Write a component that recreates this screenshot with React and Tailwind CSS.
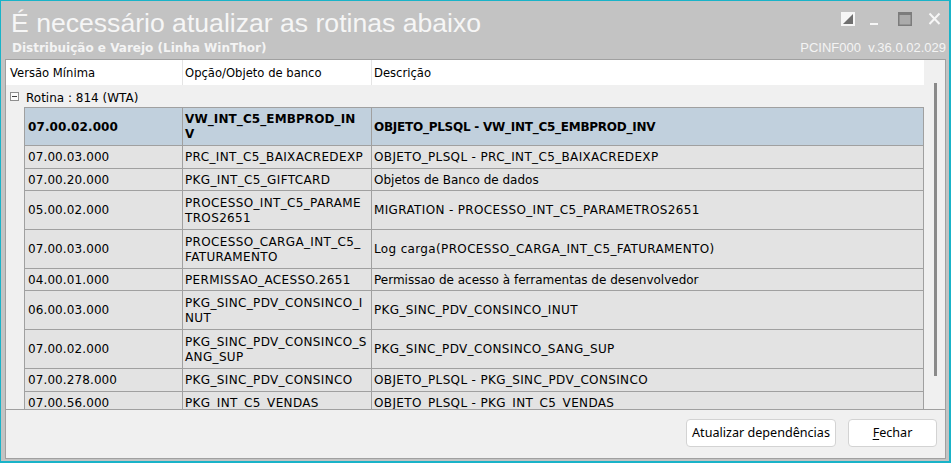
import React from "react";

const rows = [
  { v: "07.00.02.000", o: ["VW_INT_C5_EMBPROD_IN", "V"], d: "OBJETO_PLSQL - VW_INT_C5_EMBPROD_INV", h: "h-[39px]", sel: true },
  { v: "07.00.03.000", o: ["PRC_INT_C5_BAIXACREDEXP"], d: "OBJETO_PLSQL - PRC_INT_C5_BAIXACREDEXP", h: "h-[23px]", caps: true },
  { v: "07.00.20.000", o: ["PKG_INT_C5_GIFTCARD"], d: "Objetos de Banco de dados", h: "h-[22px]" },
  { v: "05.00.02.000", o: ["PROCESSO_INT_C5_PARAME", "TROS2651"], d: "MIGRATION - PROCESSO_INT_C5_PARAMETROS2651", h: "h-[39px]", caps: true },
  { v: "07.00.03.000", o: ["PROCESSO_CARGA_INT_C5_", "FATURAMENTO"], d: "Log carga(PROCESSO_CARGA_INT_C5_FATURAMENTO)", h: "h-[39px]", caps: true },
  { v: "04.00.01.000", o: ["PERMISSAO_ACESSO.2651"], d: "Permissao de acesso à ferramentas de desenvolvedor", h: "h-[22px]" },
  { v: "06.00.03.000", o: ["PKG_SINC_PDV_CONSINCO_I", "NUT"], d: "PKG_SINC_PDV_CONSINCO_INUT", h: "h-[39px]", caps: true },
  { v: "07.00.02.000", o: ["PKG_SINC_PDV_CONSINCO_S", "ANG_SUP"], d: "PKG_SINC_PDV_CONSINCO_SANG_SUP", h: "h-[39px]", caps: true },
  { v: "07.00.278.000", o: ["PKG_SINC_PDV_CONSINCO"], d: "OBJETO_PLSQL - PKG_SINC_PDV_CONSINCO", h: "h-[23px]", caps: true },
  { v: "07.00.56.000", o: ["PKG_INT_C5_VENDAS"], d: "OBJETO_PLSQL - PKG_INT_C5_VENDAS", h: "h-[22px]", caps: true },
];

function Row({ r }) {
  const bg = r.sel ? "bg-[#c1d0dd] font-bold" : "bg-[#e3e3e3]";
  const track3 = r.sel ? "tracking-[-0.25px]" : r.caps ? "tracking-[0.35px]" : "";
  return (
    <div className={`flex shrink-0 ${r.h}`}>
      <div className="w-[18px] shrink-0 bg-[#f0f0f0]" />
      <div className={`flex flex-1 border-b border-[#a0a0a0] ${r.sel ? "border-t" : ""} ${bg}`}>
        <div className="flex w-[158px] shrink-0 items-center border-l border-[#a0a0a0] pl-[3px] pt-[1px] leading-[15px] tracking-[0.1px] whitespace-nowrap">
          {r.v}
        </div>
        <div
          className={`flex w-[189px] shrink-0 flex-col justify-center border-l border-[#a0a0a0] pl-[2px] pt-[1px] leading-[15px] whitespace-nowrap ${
            r.sel ? "tracking-[0.1px]" : "tracking-[0.35px]"
          }`}
        >
          {r.o.map((t, i) => (
            <span key={i}>{t}</span>
          ))}
        </div>
        <div className={`flex flex-1 items-center border-l border-r border-[#a0a0a0] pl-[2px] pt-[1px] leading-[15px] whitespace-nowrap ${track3}`}>
          {r.d}
        </div>
      </div>
    </div>
  );
}

export default function App() {
  return (
    <div className="flex h-[463px] w-[951px] flex-col overflow-hidden border-t border-l border-r-2 border-b-2 border-[#19b3c8] bg-[#c3c3c3]">
      {/* Title block */}
      <div className="flex h-[58px] shrink-0 flex-col">
        <div className="flex items-start pt-[7px]">
          <div className="pl-[10px] font-['Liberation_Sans',Arial,sans-serif] text-[26.6px] leading-[30px] text-[#f6f6f6] whitespace-nowrap">
            É necessário atualizar as rotinas abaixo
          </div>
          <div className="ml-auto mt-[4px] flex items-start pr-[8px]">
            <svg width="14" height="14" viewBox="0 0 14 14">
              <rect x="0.75" y="0.75" width="12.5" height="12.5" fill="#f6f6f6" stroke="#f6f6f6" strokeWidth="1.5" />
              <polygon points="2,12 12,2 12,12" fill="#6f6f6f" />
            </svg>
            <svg width="8" height="14" viewBox="0 0 8 14" className="ml-[15px]">
              <rect x="0" y="11" width="8" height="2" fill="#f6f6f6" />
            </svg>
            <svg width="14" height="14" viewBox="0 0 14 14" className="ml-[20px]">
              <rect x="0.75" y="0.75" width="12.5" height="12.5" fill="#ababab" stroke="#7c7c7c" strokeWidth="1.5" />
              <rect x="0" y="0" width="14" height="3" fill="#7c7c7c" />
            </svg>
            <svg width="13" height="14" viewBox="0 0 13 14" className="ml-[16px]">
              <path d="M1.5 1.5 L11.5 12 M11.5 1.5 L1.5 12" stroke="#f6f6f6" strokeWidth="2" />
            </svg>
          </div>
        </div>
        <div className="mt-[3px] flex items-baseline pl-[11px] pr-[3px]">
          <span className="font-['DejaVu_Sans',sans-serif] text-[12px] font-bold leading-[14px] text-[#f4f4f4] whitespace-nowrap">
            Distribuição e Varejo (Linha WinThor)
          </span>
          <span className="ml-auto font-['Liberation_Sans',Arial,sans-serif] text-[13px] leading-[14px] text-[#f4f4f4] whitespace-pre">
            PCINF000  v.36.0.02.029
          </span>
        </div>
      </div>

      {/* Panel */}
      <div className="ml-[4px] mr-[3px] flex h-[400px] shrink-0 flex-col border border-[#a0a0a0] bg-[#f0f0f0]">
        <div className="flex h-[350px] shrink-0 border-b border-[#a0a0a0] font-['DejaVu_Sans',sans-serif] text-[12px] text-black">
          <div className="flex w-[918px] shrink-0 flex-col overflow-hidden">
            {/* header */}
            <div className="flex h-[25px] shrink-0 bg-white text-[11.6px]">
              <div className="flex w-[176px] shrink-0 items-center pl-[4px] pt-[3px]">Versão Mínima</div>
              <div className="flex w-[189px] shrink-0 items-center border-l border-[#e4e4e4] pl-[2px] pt-[3px]">
                Opção/Objeto de banco
              </div>
              <div className="flex flex-1 items-center border-l border-[#e4e4e4] pl-[2px] pt-[3px]">Descrição</div>
            </div>
            {/* group row */}
            <div className="flex h-[22px] shrink-0 items-center bg-[#f0f0f0]">
              <div className="ml-[4px] flex h-[9px] w-[9px] items-center justify-center border border-[#8e8e8e] bg-[#fafafa]">
                <div className="h-px w-[5px] bg-[#404040]" />
              </div>
              <span className="ml-[7px] pt-[3px] whitespace-nowrap">Rotina : 814 (WTA)</span>
            </div>
            {rows.map((r, i) => (
              <Row key={i} r={r} />
            ))}
          </div>
          {/* scrollbar */}
          <div className="flex flex-1 flex-col bg-[#f0f0f0] pt-[23px] pl-[10px]">
            <div className="h-[293px] w-[3px] bg-[#8a8a8a]" />
          </div>
        </div>
        {/* button bar */}
        <div className="flex flex-1 items-start justify-end gap-[12px] pt-[9px] pr-[8px] font-['Noto_Sans',sans-serif] text-[12.6px] text-black">
          <div className="flex h-[28px] w-[150px] items-center justify-center rounded-[4px] border border-[#d3d3d3] bg-white">
            Atualizar dependências
          </div>
          <div className="flex h-[28px] w-[89px] items-center justify-center rounded-[4px] border border-[#d3d3d3] bg-white">
            <span>
              <span className="underline underline-offset-2">F</span>echar
            </span>
          </div>
        </div>
      </div>
    </div>
  );
}
